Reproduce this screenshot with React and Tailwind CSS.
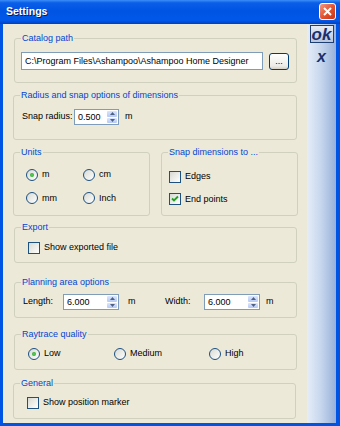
import React from 'react';

const font = { fontFamily: '"Liberation Sans", Arial, sans-serif' };

function Radio({ checked, label }) {
  return (
    <div className="flex items-center gap-[4px]">
      <span className="w-[12px] h-[12px] rounded-full border border-[#1c5180] bg-[linear-gradient(135deg,#d8d8d2,#ffffff)] flex items-center justify-center">
        {checked && <span className="w-[4px] h-[4px] rounded-full bg-[radial-gradient(circle,#5ed35e,#1c9c1c)]" />}
      </span>
      <span>{label}</span>
    </div>
  );
}

function Check({ checked, label }) {
  return (
    <div className="flex items-center gap-[4px]">
      <span className="w-[12px] h-[12px] border border-[#1c5180] bg-[linear-gradient(135deg,#d8d8d2,#ffffff)] flex items-center justify-center">
        {checked && (
          <svg width="8" height="8" viewBox="0 0 8 8">
            <path d="M1 3.5 L3 5.5 L7 1.5" fill="none" stroke="#21a121" strokeWidth="1.8" />
          </svg>
        )}
      </span>
      <span>{label}</span>
    </div>
  );
}

function Arrow({ up }) {
  return (
    <span className="flex-1 flex items-center justify-center bg-[linear-gradient(180deg,#dbe6fd,#b6c9f5)] rounded-[1px]">
      <svg width="5" height="3" viewBox="0 0 5 3">
        <path d={up ? 'M0 3 L2.5 0 L5 3 Z' : 'M0 0 L2.5 3 L5 0 Z'} fill="#4d6185" />
      </svg>
    </span>
  );
}

function Spin({ value, width }) {
  return (
    <div className={`flex h-[16px] ${width} border border-[#7f9db9] bg-white`}>
      <span className="flex-1 pl-[3px] leading-[14px]">{value}</span>
      <div className="flex flex-col w-[12px] p-[1px] gap-[1px]">
        <Arrow up />
        <Arrow />
      </div>
    </div>
  );
}

function Group({ title, className, children }) {
  return (
    <fieldset className={`border border-[#d0d0bf] rounded-[3px] ${className}`}>
      <legend className="ml-[6px] px-[1px] leading-[13px] text-[#0046d5]">{title}</legend>
      {children}
    </fieldset>
  );
}

export default function App() {
  return (
    <div className="w-[340px] h-[426px] flex flex-col bg-[#0054e3] text-[9px] text-black" style={font}>
      <div className="h-[24px] flex items-center justify-between pl-[6px] pr-[4px] bg-[linear-gradient(180deg,#3c8ef8_0%,#0a5ee8_12%,#0054e3_45%,#0058ea_85%,#003fc0_100%)]">
        <span className="text-white font-bold text-[10.5px] [text-shadow:1px_1px_#0a1a60]">Settings</span>
        <span className="w-[17px] h-[17px] mt-[-1px] rounded-[3px] border border-white bg-[linear-gradient(135deg,#f29a82,#e2502c_55%,#c4361a)] flex items-center justify-center">
          <svg width="9" height="9" viewBox="0 0 9 9">
            <path d="M1 1 L8 8 M8 1 L1 8" stroke="white" strokeWidth="2" />
          </svg>
        </span>
      </div>

      <div className="flex-1 flex pl-[3px] pr-[4px] pb-[3px]">
        <div className="flex-1 bg-[#ece9d8] flex flex-col">
          <Group title="Catalog path" className="ml-[11px] mt-[8px] w-[283px] h-[51px]">
            <div className="flex items-center mt-[7px] pl-[6px]">
              <div className="w-[242px] h-[18px] border border-[#7f9db9] bg-white pl-[3px] leading-[16px]">
                C:\Program Files\Ashampoo\Ashampoo Home Designer
              </div>
              <div className="ml-[6px] w-[20px] h-[17px] border border-[#003c74] rounded-[3px] bg-[linear-gradient(180deg,#ffffff,#ecebe6_80%,#d6d0c5)] flex items-center justify-center leading-none">
                ...
              </div>
            </div>
          </Group>

          <Group title="Radius and snap options of dimensions" className="ml-[10px] mt-[6px] w-[284px] h-[51px]">
            <div className="flex items-center mt-[7px] pl-[8px]">
              <span className="w-[52px]">Snap radius:</span>
              <Spin value="0.500" width="w-[45px]" />
              <span className="ml-[6px]">m</span>
            </div>
          </Group>

          <div className="flex ml-[10px] mt-[6px] gap-[11px]">
            <Group title="Units" className="w-[137px] h-[70px]">
              <div className="grid grid-cols-[57px_auto] gap-y-[10px] mt-[9px] pl-[12px]">
                <Radio checked label="m" />
                <Radio label="cm" />
                <Radio label="mm" />
                <Radio label="Inch" />
              </div>
            </Group>
            <Group title="Snap dimensions to ..." className="w-[137px] h-[70px]">
              <div className="flex flex-col gap-[9px] mt-[11px] pl-[7px]">
                <Check label="Edges" />
                <Check checked label="End points" />
              </div>
            </Group>
          </div>

          <Group title="Export" className="ml-[11px] mt-[5px] w-[283px] h-[42px]">
            <div className="mt-[7px] pl-[13px]">
              <Check label="Show exported file" />
            </div>
          </Group>

          <Group title="Planning area options" className="ml-[11px] mt-[13px] w-[283px] h-[42px]">
            <div className="flex items-center mt-[5px] pl-[8px]">
              <span className="w-[40px]">Length:</span>
              <Spin value="6.000" width="w-[56px]" />
              <span className="ml-[9px] w-[37px]">m</span>
              <span className="w-[39px]">Width:</span>
              <Spin value="6.000" width="w-[56px]" />
              <span className="ml-[6px]">m</span>
            </div>
          </Group>

          <Group title="Raytrace quality" className="ml-[11px] mt-[10px] w-[283px] h-[42px]">
            <div className="flex items-center mt-[6px] pl-[13px]">
              <div className="w-[86px]"><Radio checked label="Low" /></div>
              <div className="w-[95px]"><Radio label="Medium" /></div>
              <Radio label="High" />
            </div>
          </Group>

          <Group title="General" className="ml-[10px] mt-[7px] w-[283px] h-[42px]">
            <div className="mt-[6px] pl-[13px]">
              <Check label="Show position marker" />
            </div>
          </Group>
        </div>

        <div className="w-[29px] bg-[linear-gradient(90deg,#e6edf8,#c9d8ee_45%,#98b1da)] flex flex-col items-center">
          <div className="mt-[1px] w-[24px] h-[18px] border border-[#1d3f74] bg-[linear-gradient(180deg,#e8ecf4,#b9c6dc)] flex items-center justify-center">
            <span className="italic font-bold text-[17px] leading-none text-[#1b2f6e]">ok</span>
          </div>
          <span className="mt-[6px] italic font-bold text-[16px] leading-none text-[#1b2f6e]">x</span>
        </div>
      </div>
    </div>
  );
}
